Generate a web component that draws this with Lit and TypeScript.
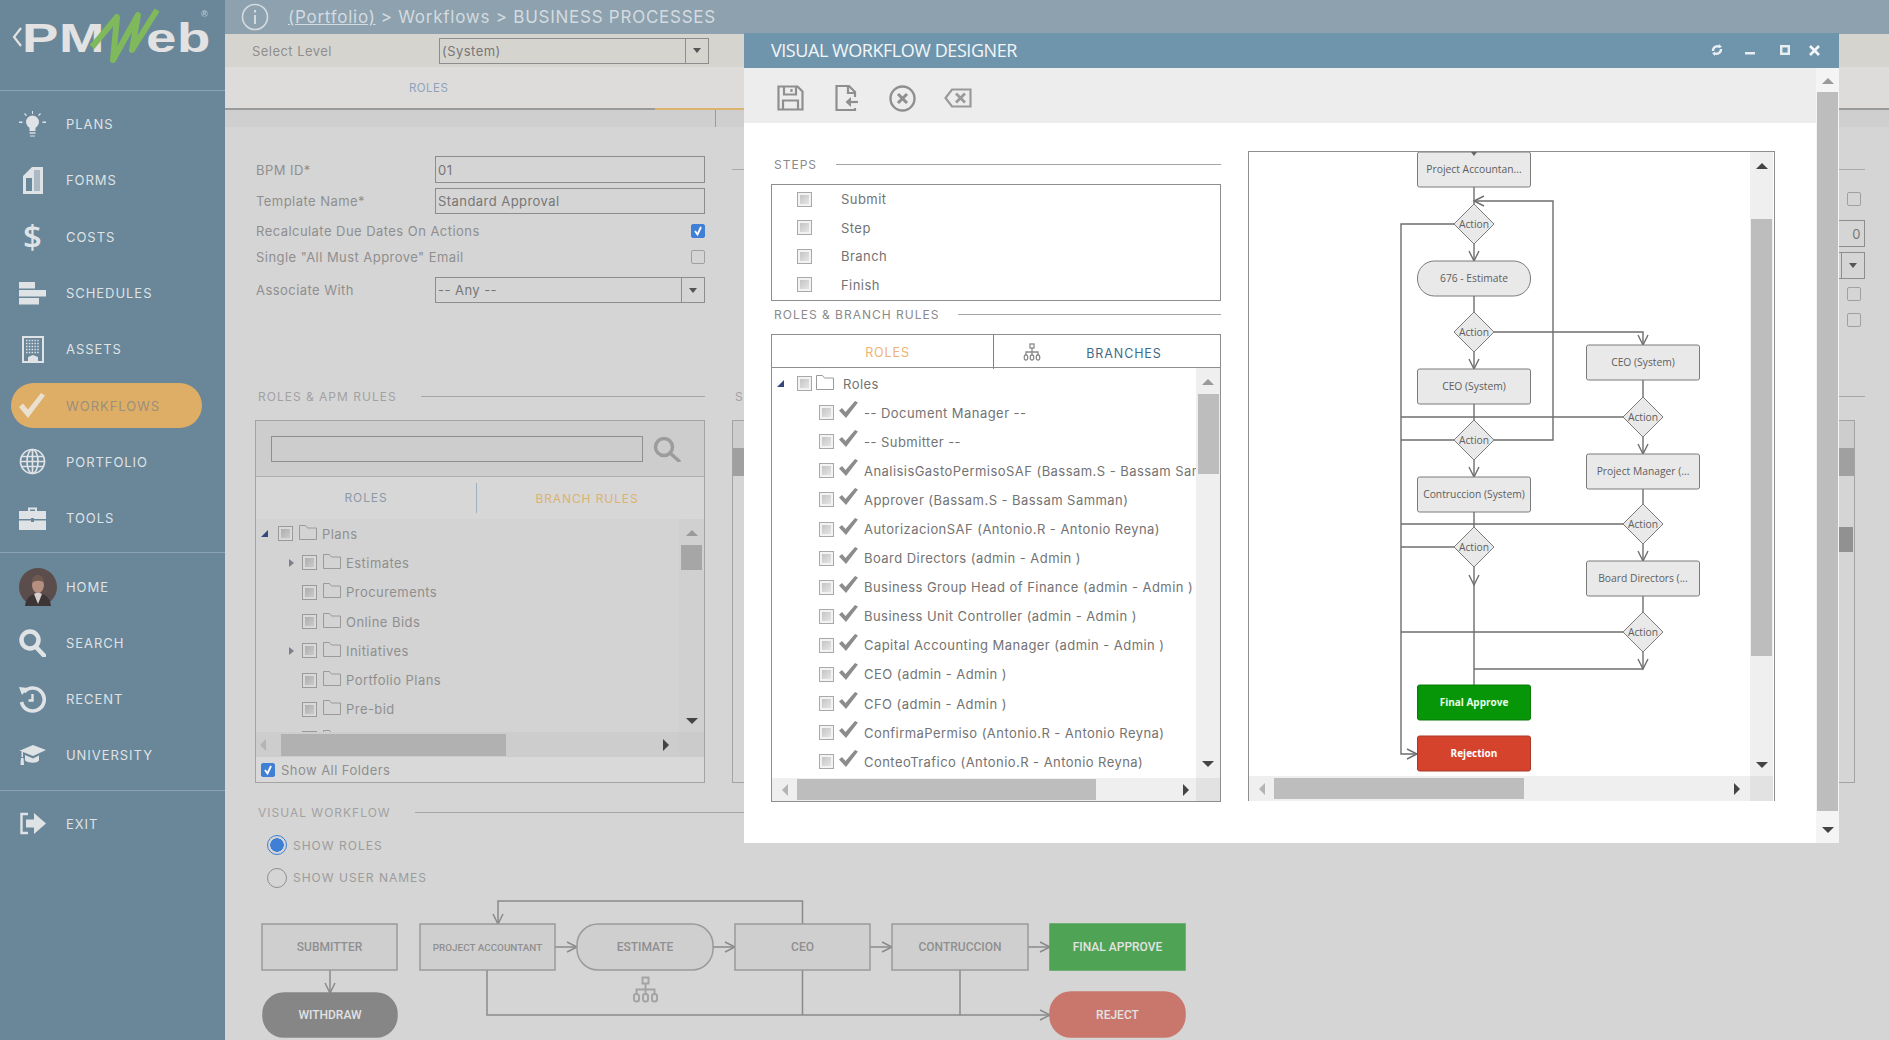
import {LitElement, css, html, svg} from 'lit'
import {customElement} from 'lit/decorators.js'

const UI = '#dfe3e5'

// ---- sidebar icons ----
const navIcons: Record<string, any> = {
  plans: svg`<svg width="27" height="27" viewBox="0 0 27 27" fill="${UI}">
    <circle cx="13.5" cy="11" r="6.5"/><rect x="10.5" y="16" width="6" height="4"/><rect x="10.5" y="21" width="6" height="2" opacity=".7"/><rect x="11" y="24" width="5" height="2" opacity=".5"/>
    <path d="M13 0h1v3h-1zM5 3l1-1 2 2.500-1 .6zM22 3l-1-1-2 2.500 1 .6zM0 10.500h3.500v1.500H0zM23.500 10.500H27v1.500h-3.500z"/></svg>`,
  forms: svg`<svg width="27" height="28" viewBox="0 0 27 28" fill="${UI}">
    <path fill-rule="evenodd" d="M4 10L13 1h11v27H4zM7 12v13h6V12zM15 4v21h6V4z"/><path d="M15 4h6v21h-6z" opacity=".55"/></svg>`,
  costs: html`<span class="dollar">$</span>`,
  schedules: svg`<svg width="27" height="23" viewBox="0 0 27 23" fill="${UI}">
    <rect x="0" y="0" width="16" height="6.500"/><rect x="0" y="8" width="27" height="6.500"/><rect x="0" y="16" width="20" height="6.500"/></svg>`,
  assets: svg`<svg width="27" height="27" viewBox="0 0 27 27">
    <rect x="4" y="1" width="20" height="25" fill="none" stroke="${UI}" stroke-width="2"/>
    <path d="M7 4.500h14M7 7.500h14M7 10.500h14M7 13.500h14M7 16.500h14" stroke="${UI}" stroke-width="1.600" stroke-dasharray="1.500 1.300"/>
    <path d="M9 26v-5l5-2 5 2v5z" fill="${UI}"/></svg>`,
  workflows: svg`<svg width="27" height="25" viewBox="0 0 27 25" fill="#e9e0cf">
    <path d="M0 14l4-3.500 5 6L22 0l4 2.500L9 25z"/></svg>`,
  portfolio: svg`<svg width="27" height="27" viewBox="0 0 27 27" fill="none" stroke="${UI}" stroke-width="1.700">
    <circle cx="13.500" cy="13.500" r="12"/><ellipse cx="13.500" cy="13.500" rx="5.500" ry="12"/><path d="M13.500 1.500v24M2.500 8.500h22M1.500 13.500h24M2.500 18.500h22"/></svg>`,
  tools: svg`<svg width="27" height="24" viewBox="0 0 27 24" fill="${UI}">
    <path fill-rule="evenodd" d="M9 5V1.500h9V5h-2V3.500h-5V5z"/><path d="M0 5h27v8H15v-1h-3v1H0zM0 14.500h12v1.500h3v-1.500h12V24H0z"/></svg>`,
  search: svg`<svg width="27" height="28" viewBox="0 0 27 28" fill="none" stroke="${UI}">
    <circle cx="11" cy="11" r="8.500" stroke-width="4.500"/><path d="M17 18l8 8.500" stroke-width="4.500" stroke-linecap="round"/></svg>`,
  recent: svg`<svg width="27" height="27" viewBox="0 0 27 27" fill="none" stroke="${UI}">
    <path d="M5 6a11.500 11.500 0 1 1-2.500 10" stroke-width="3.600"/><path d="M0 1l9 1-6 7z" fill="${UI}" stroke="none"/><path d="M13.500 8v6.500h-4" stroke-width="2.400"/></svg>`,
  university: svg`<svg width="27" height="21" viewBox="0 0 27 21" fill="${UI}">
    <path d="M0 6L14 0l13 5-13 6L4 7v5H2.500V6z"/><path d="M6 10l8 3.500 6-3v5c-2 3-10 3-14 0zM2 13h2.500l.5 7H1.500z"/></svg>`,
  exit: svg`<svg width="27" height="25" viewBox="0 0 27 25">
    <path d="M9 3H2.500v19H9" fill="none" stroke="${UI}" stroke-width="2.400"/>
    <path d="M7 8.500h8V2l12 10.500L15 23v-6.500H7z" fill="${UI}"/></svg>`,
  home: svg`<svg class="avatar" width="38" height="38" viewBox="0 0 38 38">
    <circle cx="19" cy="19" r="19" fill="#5a4d4c"/>
    <path d="M6 38c1-9 6-12 13-13 7 1 12 4 13 13z" fill="#3d3436"/>
    <path d="M15 26l4 10 4-10-4-2z" fill="#d5cfcd"/>
    <ellipse cx="19" cy="17" rx="6" ry="8" fill="#b58f80"/>
    <path d="M13 15c0-6 3-8 6-8s6 2 6 8c-2-3-9-3-12 0z" fill="#6f5a52"/>
  </svg>`,
}

const navGroups = [
  [
    ['plans', 'PLANS'],
    ['forms', 'FORMS'],
    ['costs', 'COSTS'],
    ['schedules', 'SCHEDULES'],
    ['assets', 'ASSETS'],
    ['workflows', 'WORKFLOWS'],
    ['portfolio', 'PORTFOLIO'],
    ['tools', 'TOOLS'],
  ],
  [
    ['home', 'HOME'],
    ['search', 'SEARCH'],
    ['recent', 'RECENT'],
    ['university', 'UNIVERSITY'],
  ],
  [['exit', 'EXIT']],
]

// ---- little shared bits ----
const box = (cls = '') => html`<span class="box ${cls}"></span>`
const folder = () => svg`<svg class="folder" width="18" height="15" viewBox="0 0 18 15" fill="none" stroke="#9a9a9a">
  <path d="M.5 14.500V.5h6l2 2.500h9v11.500z"/></svg>`
const tick = () => svg`<svg class="tick" width="19" height="17" viewBox="0 0 19 17" fill="#8c8c8c">
  <path d="M0 9.500l3-2.500 3.500 4L16 0l3 1.500L7 17z"/></svg>`
const hierarchy = (w: number, h: number, c: string) => svg`<svg width="${w}" height="${h}" viewBox="0 0 18 18" fill="none" stroke="${c}" stroke-width="1.300">
  <rect x="7" y="1" width="4" height="4"/><path d="M9 5v7M3 12V9h12v3"/><rect x="1.300" y="12" width="3.400" height="5" rx="1.500"/><rect x="7.300" y="12" width="3.400" height="5" rx="1.500"/><rect x="13.300" y="12" width="3.400" height="5" rx="1.500"/></svg>`
const smallTick = () => svg`<svg width="12" height="12" viewBox="0 0 12 12" fill="none" stroke="#fff" stroke-width="1.800"><path d="M3 6l2.500 3.500L9 2"/></svg>`

const plans = [
  ['Estimates', true],
  ['Procurements', false],
  ['Online Bids', false],
  ['Initiatives', true],
  ['Portfolio Plans', false],
  ['Pre-bid', false],
  ['', false],
] as [string, boolean][]

const roles = [
  '-- Document Manager --',
  '-- Submitter --',
  'AnalisisGastoPermisoSAF (Bassam.S - Bassam Samman)',
  'Approver (Bassam.S - Bassam Samman)',
  'AutorizacionSAF (Antonio.R - Antonio Reyna)',
  'Board Directors (admin - Admin )',
  'Business Group Head of Finance (admin - Admin )',
  'Business Unit Controller (admin - Admin )',
  'Capital Accounting Manager (admin - Admin )',
  'CEO (admin - Admin )',
  'CFO (admin - Admin )',
  'ConfirmaPermiso (Antonio.R - Antonio Reyna)',
  'ConteoTrafico (Antonio.R - Antonio Reyna)',
]

// open arrow head, tip at x,y
const head = (x: number, y: number, dir: 'd' | 'r' | 'l') => {
  const p =
    dir === 'd'
      ? `M${x - 5} ${y - 10}L${x} ${y}L${x + 5} ${y - 10}`
      : dir === 'r'
        ? `M${x - 10} ${y - 5}L${x} ${y}L${x - 10} ${y + 5}`
        : `M${x + 10} ${y - 5}L${x} ${y}L${x + 10} ${y + 5}`
  return svg`<path d="${p}" fill="none"/>`
}

// ---- designer flow chart, page coordinates ----
const AX = 1474
const BX = 1643
const flowBoxes: [number, number, string, string][] = [
  [AX, 152, 'Project Accountan...', ''],
  [AX, 261, '676 - Estimate', 'pill'],
  [AX, 369, 'CEO (System)', ''],
  [AX, 477, 'Contruccion (System)', ''],
  [BX, 345, 'CEO (System)', ''],
  [BX, 454, 'Project Manager (...', ''],
  [BX, 561, 'Board Directors (...', ''],
  [AX, 685, 'Final Approve', 'ok'],
  [AX, 736, 'Rejection', 'bad'],
]
const diamonds = [
  [AX, 224],
  [AX, 332],
  [AX, 440],
  [AX, 547],
  [BX, 417],
  [BX, 524],
  [BX, 632],
]
const flowLines = [
  'M1474 187V685',
  'M1643 380V669',
  'M1474 669H1643',
  'M1454 224H1401V754H1417',
  'M1494 440H1553V201H1474',
  'M1494 332H1643V345',
  'M1401 417H1623',
  'M1401 440H1454',
  'M1401 524H1623',
  'M1401 547H1454',
  'M1401 632H1623',
]

const flowChart = () => svg`<svg class="chart" viewBox="1249 152 501 624" width="501" height="624">
  <g fill="none" stroke="#6e6e6e" stroke-width="1.400">
    ${flowLines.map((d) => svg`<path d="${d}"/>`)}
    ${head(AX, 261, 'd')}${head(AX, 369, 'd')}${head(AX, 477, 'd')}${head(AX, 585, 'd')}
    ${head(BX, 345, 'd')}${head(BX, 454, 'd')}${head(BX, 561, 'd')}${head(BX, 669, 'd')}
    ${head(AX, 201, 'l')}${head(1417, 754, 'r')}
  </g>
  ${flowBoxes.map(([cx, y, label, kind]) => svg`
    <rect class="node ${kind}" x="${cx - 56.5}" y="${y}" width="113" height="35" rx="${kind === 'pill' ? 17 : 2}"/>
    <text class="node-text ${kind}" x="${cx}" y="${y + 21}">${label}</text>`)}
  <path d="M1471 152h6l-3 4z" fill="#666"/>
  ${diamonds.map(([cx, cy]) => svg`
    <path class="node" d="M${cx} ${cy - 20}L${cx + 20} ${cy}L${cx} ${cy + 20}L${cx - 20} ${cy}Z"/>
    <text class="node-text" x="${cx}" y="${cy + 4}">Action</text>`)}
</svg>`

// ---- workflow preview behind the dialog, page coordinates ----
const wfBoxes: [number, number, number, number, string, string][] = [
  [262, 924, 135, 46, 'SUBMITTER', ''],
  [420, 924, 135, 46, 'PROJECT ACCOUNTANT', 'small'],
  [577, 924, 136, 46, 'ESTIMATE', 'round'],
  [735, 924, 135, 46, 'CEO', ''],
  [892, 924, 136, 46, 'CONTRUCCION', ''],
  [1050, 924, 135, 46, 'FINAL APPROVE', 'done'],
  [263, 993, 134, 44, 'WITHDRAW', 'round dark'],
  [1050, 992, 135, 45, 'REJECT', 'round red'],
]
const workflowPreview = () => svg`<svg class="wf" viewBox="225 895 1664 145" width="1664" height="145">
  <g fill="none" stroke="#8a8a8a" stroke-width="1.500">
    <path d="M802.500 924V901H498V924"/>
    <path d="M330 970V993"/>
    <path d="M555 947H577M713 947H735M870 947H892M1028 947H1050"/>
    <path d="M487 970V1015H1050M802.500 970V1015M960 970V1015"/>
    ${head(498, 924, 'd')}${head(330, 993, 'd')}${head(577, 947, 'r')}${head(735, 947, 'r')}
    ${head(892, 947, 'r')}${head(1050, 947, 'r')}${head(1050, 1015, 'r')}
  </g>
  ${wfBoxes.map(([x, y, w, h, label, kind]) => svg`
    <rect class="wf-box ${kind}" x="${x}" y="${y}" width="${w}" height="${h}" rx="${kind.includes('round') ? 21 : 0}"/>
    <text class="wf-text ${kind}" x="${x + w / 2}" y="${y + h / 2 + 4}">${label}</text>`)}
  <g transform="translate(632 976)">${hierarchy(27, 27, '#a3a3a3')}</g>
</svg>`

@customElement('app-root')
export class AppRoot extends LitElement {
  static styles = css`
    :host {
      display: block;
      width: 1889px;
      height: 1040px;
      overflow: hidden;
      position: relative;
      background: #d5d5d5;
      font-family: Inter, 'Open Sans', sans-serif;
      font-size: 13px;
      letter-spacing: 0.45px;
      color: #8f8f8f;
    }

    .page {
      display: flex;
      height: 100%;
    }

    /* sidebar */
    .sidebar {
      width: 225px;
      flex: none;
      background: #6a8699;
      color: #dfe3e5;
    }
    .logo {
      height: 90px;
      box-sizing: border-box;
      padding: 8px 0 0 7px;
    }
    .logo svg {
      display: block;
    }
    .logo text {
      font-family: 'Liberation Sans', Arial, sans-serif;
      font-weight: 700;
      fill: #e2e2e2;
    }
    .group {
      padding-top: 5px;
    }
    .logo + .group {
      border-top: 1px solid #8ba2b2;
    }
    .group + .group {
      margin-top: 6px;
      border-top: 1px solid #8ba2b2;
    }
    .item {
      height: 56.3px;
      box-sizing: border-box;
      display: flex;
      align-items: center;
      padding-left: 19px;
      font-size: 13px;
      letter-spacing: 0.95px;
    }
    .item.active {
      height: 45px;
      margin: 5.6px 23px 5.7px 11px;
      padding-left: 8px;
      border-radius: 23px;
      background: #dfae66;
      color: #9b8f7d;
    }
    .nav-icon {
      width: 47px;
      flex: none;
      display: flex;
      align-items: center;
    }
    .nav-icon svg {
      display: block;
    }
    .dollar {
      width: 27px;
      text-align: center;
      font: 600 33px/1 'Open Sans', sans-serif;
      letter-spacing: 0;
      color: #dfe3e5;
    }

    /* page behind the dialog */
    .main {
      flex: 1;
      min-width: 0;
    }
    .topbar {
      height: 34px;
      background: #8da1ae;
      display: flex;
      align-items: center;
      padding-left: 16px;
      font-size: 17px;
      color: #d4dbe0;
      letter-spacing: 0.75px;
    }
    .topbar svg {
      margin-right: 19px;
    }
    .topbar u {
      margin-right: 5px;
    }
    .level {
      height: 33px;
      background: #d6d4cf;
      display: flex;
      align-items: center;
      padding-left: 27px;
    }
    .level .lab {
      width: 187px;
    }
    .tabs {
      height: 41px;
      background: #dddcda;
      padding-left: 184px;
      width: 430px;
      line-height: 43px;
      font-size: 11.500px;
      color: #8fa3bd;
    }
    .tabs-bg {
      background: #dddcda;
    }
    .tabline {
      display: flex;
      height: 2px;
      background: #9a9a9a;
    }
    .tabline i {
      display: block;
      width: 345px;
      margin-left: 430px;
      background: #dcb26f;
    }
    .band {
      height: 17px;
      background: #cfcfcf;
    }
    .band i {
      display: block;
      width: 1px;
      height: 17px;
      margin-left: 490px;
      background: #9c9c9c;
    }

    .form {
      height: 261px;
      box-sizing: border-box;
      padding: 29px 24px 0 30px;
      display: grid;
      grid-template-columns: 450px 1fr;
      column-gap: 27px;
    }
    .frow {
      display: flex;
      align-items: center;
      justify-content: space-between;
      height: 26px;
    }
    .frow > span:first-child {
      padding-left: 1px;
    }
    .frow.a {
      height: 27px;
    }
    .frow.b {
      margin-top: 5px;
    }
    .frow.c {
      margin-top: 4px;
    }
    .frow.e {
      margin-top: 7px;
    }
    .field {
      width: 270px;
      height: 100%;
      box-sizing: border-box;
      border: 1px solid #8d8d8d;
      padding-left: 2px;
      display: flex;
      align-items: center;
      color: #777;
    }
    .level .field {
      height: 26px;
    }
    .select {
      padding-right: 23px;
      justify-content: space-between;
    }
    .drop {
      margin-left: auto;
      margin-right: -23px;
      width: 22px;
      height: 100%;
      border-left: 1px solid #8d8d8d;
      display: flex;
      align-items: center;
      justify-content: center;
    }
    .check {
      width: 14px;
      height: 14px;
      box-sizing: border-box;
      border: 1px solid #a0a0a0;
      border-radius: 2px;
    }
    .check.on {
      background: #3f7fd6;
      border-color: #3f7fd6;
    }
    .check.on svg {
      display: block;
    }
    .rside {
      display: flex;
      flex-direction: column;
      align-items: flex-end;
    }
    .rside hr {
      width: 100%;
      height: 1px;
      margin: 13px 0 0;
      border: none;
      background: #a9a9a9;
    }
    .rside .check {
      margin: 22px 4px 0 0;
    }
    .rside .num {
      width: 140px;
      height: 27px;
      margin-top: 14px;
      justify-content: flex-end;
      padding-right: 3px;
    }
    .rside .sel {
      width: 120px;
      height: 27px;
      margin-top: 5px;
      justify-content: flex-end;
      padding: 0;
    }
    .rside .sel .drop {
      margin: 0;
    }
    .rside .check.c2 {
      margin-top: 8px;
    }
    .rside .check.c3 {
      margin-top: 12px;
    }

    .section {
      display: flex;
      align-items: center;
      gap: 24px;
      height: 16px;
      padding-left: 3px;
      font-size: 12px;
      letter-spacing: 1px;
      color: #a2a2a2;
      white-space: nowrap;
    }
    .section::after {
      content: '';
      flex: 1;
      height: 1px;
      background: #a5a5a5;
    }
    .cols {
      display: grid;
      grid-template-columns: 450px 1fr;
      column-gap: 27px;
      padding: 0 24px 0 30px;
    }
    .panel {
      margin-top: 16px;
      height: 363px;
      box-sizing: border-box;
      border: 1px solid #a3a3a3;
      display: flex;
      flex-direction: column;
    }
    .panel-mid {
      margin-right: 10px;
    }
    .strip {
      height: 27px;
      background: #cdcdcd;
    }
    .strip.dark {
      height: 28px;
      background: #a0a0a0;
    }
    .sliver {
      align-self: flex-end;
      width: 15px;
      height: 25px;
      margin: 51px 1px 0 0;
      background: #919191;
    }
    .searchbar {
      height: 56px;
      box-sizing: border-box;
      flex: none;
      background: #cdcdcd;
      border-bottom: 1px solid #aeaeae;
      padding-left: 15px;
      display: flex;
      align-items: center;
      gap: 10px;
    }
    .searchbar span {
      width: 372px;
      height: 26px;
      box-sizing: border-box;
      border: 1px solid #8f8f8f;
    }
    .ptabs {
      height: 42px;
      flex: none;
      display: grid;
      grid-template-columns: 221px 1fr;
      align-items: center;
      text-align: center;
      font-size: 12px;
      letter-spacing: 0.9px;
      background: #d7d7d7;
    }
    .ptabs .on {
      color: #8d99a7;
      height: 30px;
      line-height: 30px;
      border-right: 1px solid #9fb0bf;
    }
    .ptabs .off {
      color: #dcb26f;
      padding-right: 7px;
    }
    .treewrap {
      flex: none;
      height: 238px;
      display: grid;
      grid-template-columns: 1fr 25px;
      grid-template-rows: 213px 25px;
      background: #d3d3d3;
    }
    .tree {
      overflow: hidden;
    }
    .tree-row {
      height: 29.3px;
      display: flex;
      align-items: center;
      white-space: nowrap;
    }
    .tree-row .box {
      margin-right: 6px;
    }
    .folder {
      flex: none;
      margin-right: 5px;
      margin-top: -3px;
    }
    .tw {
      width: 17px;
      flex: none;
      box-sizing: border-box;
      display: flex;
    }
    .tree-row.root {
      padding-left: 5px;
    }
    .tree-row.sub {
      padding-left: 29px;
    }
    .tree-row.sub .tw {
      padding-left: 4px;
    }
    .showall {
      flex: 1;
      display: flex;
      align-items: center;
      gap: 6px;
      padding-left: 5px;
      background: #d9d9d9;
    }

    /* checkbox of the tree controls */
    .box {
      width: 15px;
      height: 15px;
      flex: none;
      box-sizing: border-box;
      border: 1px solid #a9a9a9;
      box-shadow: inset 0 0 0 2px #f3f3f3;
      background: linear-gradient(135deg, #bdbdbd, #ececec);
      display: block;
    }
    .behind .box {
      border-color: #9a9a9a;
      box-shadow: inset 0 0 0 2px #d9d9d9;
      background: linear-gradient(135deg, #a9a9a9, #cfcfcf);
    }

    /* scrollbar pieces */
    .vbar {
      display: flex;
      flex-direction: column;
      align-items: center;
      background: #efefef;
    }
    .hbar {
      display: flex;
      align-items: center;
      background: #efefef;
    }
    .corner {
      background: #e2e2e2;
    }
    .thumb {
      background: #bdbdbd;
      display: block;
    }
    .arr {
      width: 0;
      height: 0;
      display: block;
      flex: none;
      border-style: solid;
      border-color: transparent;
    }
    .arr.up {
      border-width: 0 6px 6px;
      border-bottom-color: #9a9a9a;
    }
    .arr.down {
      border-width: 6px 6px 0;
      border-top-color: #444;
      margin-top: auto;
    }
    .arr.left {
      border-width: 6px 6px 6px 0;
      border-right-color: #b4b4b4;
    }
    .arr.right {
      border-width: 6px 0 6px 6px;
      border-left-color: #444;
      margin-left: auto;
    }
    .arr.open {
      border-width: 0 0 7px 7px;
      border-bottom-color: #38467f;
    }
    .arr.closed {
      border-width: 4px 0 4px 5px;
      border-left-color: #7d7d90;
    }
    .arr.mini {
      border-width: 5px 4.500px 0;
      border-top-color: #555;
      margin: 0;
    }

    .treewrap .vbar {
      background: #d0d0d0;
      padding: 11px 0 8px;
    }
    .treewrap .vbar .thumb {
      width: 21px;
      height: 25px;
      margin-top: 9px;
      background: #a6a6a6;
    }
    .treewrap .hbar {
      background: #cdcdcd;
      padding: 0 10px 0 4px;
    }
    .treewrap .hbar .thumb {
      width: 225px;
      height: 22px;
      margin-left: 15px;
      background: #b1b1b1;
    }
    .treewrap .corner {
      background: #cbcbcb;
    }

    .radios {
      padding: 13px 0 0 42px;
      display: flex;
      flex-direction: column;
      gap: 8.500px;
      font-size: 12px;
      letter-spacing: 1px;
      color: #9c9c9c;
    }
    .radio {
      height: 24px;
      display: flex;
      align-items: center;
      gap: 6px;
    }
    .dot {
      width: 20px;
      height: 20px;
      box-sizing: border-box;
      border-radius: 50%;
      border: 1px solid #8f8f8f;
    }
    .dot.on {
      border-color: #3f7fd6;
      background: radial-gradient(circle, #3f7fd6 0 6.500px, #d5d5d5 7px);
    }
    .vw {
      margin-top: 21px;
      padding: 0 0 0 30px;
    }
    .vw .section {
      width: 680px;
    }
    .wf {
      display: block;
      margin-top: 5px;
    }
    .wf text {
      font-family: Roboto, 'Liberation Sans', sans-serif;
      letter-spacing: 0;
    }
    .wf-box {
      fill: #cfcfcf;
      stroke: #9b9b9b;
      stroke-width: 1.500;
    }
    .wf-box.done {
      fill: #4fa354;
      stroke: #4fa354;
    }
    .wf-box.dark {
      fill: #868686;
      stroke: #868686;
    }
    .wf-box.red {
      fill: #c9776c;
      stroke: #c9776c;
    }
    .wf-text {
      font-size: 12px;
      font-weight: 500;
      text-anchor: middle;
      fill: #8f8f8f;
    }
    .wf-text.small {
      font-size: 9.900px;
    }
    .wf-text.done,
    .wf-text.dark,
    .wf-text.red {
      fill: #e2e2e2;
    }

    /* designer dialog */
    .modal {
      position: absolute;
      left: 744px;
      top: 33px;
      width: 1095px;
      height: 810px;
      background: #fff;
      display: flex;
      flex-direction: column;
      color: #737373;
    }
    .mhead {
      height: 35px;
      flex: none;
      box-sizing: border-box;
      padding: 0 0 1px 27px;
      background: #6f95ac;
      display: flex;
      align-items: center;
      color: #f3f6f8;
      font: 400 18px 'Open Sans', sans-serif;
      letter-spacing: -0.45px;
    }
    .mhead svg {
      display: block;
    }
    .wbtns {
      margin-left: auto;
      display: flex;
      align-items: center;
      padding-right: 19px;
      gap: 22px;
    }
    .wbtns .mx {
      margin-right: -3px;
      margin-left: 3px;
    }
    .mbody {
      flex: 1;
      min-height: 0;
      display: flex;
    }
    .mmain {
      flex: 1;
      min-width: 0;
    }
    .toolbar {
      height: 55px;
      box-sizing: border-box;
      padding: 5px 0 0 18px;
      background: #ededed;
      display: flex;
      align-items: center;
    }
    .toolbar span {
      width: 56px;
      display: flex;
      justify-content: center;
    }
    .mcols {
      display: flex;
      gap: 27px;
      padding-left: 27px;
    }
    .mleft {
      width: 450px;
      padding-top: 33px;
    }
    .mleft .section {
      gap: 19px;
      color: #8a8a8a;
    }
    .steps {
      margin-top: 12px;
      height: 117px;
      box-sizing: border-box;
      border: 1px solid #8e8e8e;
    }
    .step {
      height: 28.500px;
      display: flex;
      align-items: center;
      padding-left: 25px;
      gap: 29px;
    }
    .mleft .sec2 {
      margin-top: 5px;
    }
    .rolesbox {
      margin-top: 12px;
      height: 468px;
      box-sizing: border-box;
      border: 1px solid #8e8e8e;
      display: flex;
      flex-direction: column;
    }
    .rtabs {
      height: 32px;
      flex: none;
      border-bottom: 1px solid #8e8e8e;
      display: grid;
      grid-template-columns: 222px 50px 1fr;
      align-items: center;
      font-size: 12.500px;
      letter-spacing: 0.9px;
    }
    .rtabs .on {
      height: 100%;
      box-sizing: border-box;
      padding: 2px 0 0 10px;
      line-height: 32px;
      text-align: center;
      color: #efb273;
      border-right: 1px solid #4f8fbc;
    }
    .rtabs .ico {
      display: flex;
      justify-content: center;
      padding-left: 26px;
    }
    .rtabs .off {
      text-align: center;
      color: #3f6a8a;
      padding: 3px 16px 0 0;
    }
    .rtree {
      flex: 1;
      min-height: 0;
      display: grid;
      grid-template-columns: 1fr 24px;
      grid-template-rows: 410px 23px;
    }
    .rlist {
      overflow: hidden;
      padding-top: 1px;
    }
    .rrow {
      height: 29.100px;
      display: flex;
      align-items: center;
      white-space: nowrap;
      padding-left: 47px;
    }
    .rrow.top {
      padding-left: 5px;
    }
    .rrow .box {
      margin-right: 5px;
    }
    .rrow .tw {
      width: 20px;
    }
    .rrow .tick {
      margin: -6px 6px 0 0;
      flex: none;
    }
    .rrow.top .box {
      margin-right: 4px;
    }
    .rtree .vbar {
      padding: 11px 0;
    }
    .rtree .vbar .thumb {
      width: 21px;
      height: 80px;
      margin-top: 9px;
    }
    .rtree .hbar {
      padding: 0 7px 0 10px;
    }
    .rtree .hbar .thumb {
      width: 299px;
      height: 21px;
      margin-left: 9px;
    }

    .mright {
      margin-top: 28px;
      width: 527px;
      height: 650px;
      box-sizing: border-box;
      border: 1px solid #8e8e8e;
      border-bottom: none;
      display: grid;
      grid-template-columns: 501px 23px;
      grid-template-rows: 624px 25px;
    }
    .chart {
      display: block;
    }
    .chart text {
      letter-spacing: 0;
      font-family: 'Open Sans', sans-serif;
    }
    .node {
      fill: #e9e9e9;
      stroke: #7b7b7b;
      stroke-width: 1;
    }
    .node.ok {
      fill: #079607;
      stroke: #0b7a0b;
    }
    .node.bad {
      fill: #d6432c;
      stroke: #a8392a;
    }
    .node-text {
      font-size: 10.300px;
      text-anchor: middle;
      fill: #5e5e5e;
    }
    .node-text.ok,
    .node-text.bad {
      font-size: 10px;
      font-weight: 700;
      fill: #e6ffe6;
    }
    .node-text.bad {
      fill: #fff;
    }
    .mright .vbar {
      padding: 11px 0 8px;
    }
    .mright .vbar .thumb {
      width: 21px;
      height: 437px;
      margin-top: 50px;
    }
    .mright .vbar .arr.up {
      border-bottom-color: #444;
    }
    .mright .hbar {
      padding: 0 10px 0 10px;
    }
    .mright .hbar .thumb {
      width: 250px;
      height: 21px;
      margin-left: 9px;
    }
    .mscroll {
      width: 23px;
      flex: none;
      padding: 10px 0 10px;
      background: #f4f4f4;
    }
    .mscroll .thumb {
      width: 21px;
      height: 719px;
      margin-top: 8px;
    }
  `

  private renderSidebar() {
    return html`
      <aside class="sidebar">
        <div class="logo">
          <svg width="210" height="60" viewBox="7 8 210 60">
            <path d="M21 28l-7 9 7 9" fill="none" stroke="#e2e2e2" stroke-width="2.200"/>
            <text x="22" y="52" font-size="41" textLength="83" lengthAdjust="spacingAndGlyphs">PM</text>
            <text x="146" y="52" font-size="41" textLength="65" lengthAdjust="spacingAndGlyphs">eb</text>
            <path d="M92 47L117 17 113 60 138 15 132 50 157 10" fill="none" stroke="#7fb95c" stroke-width="6" stroke-linejoin="round"/>
            <text x="201" y="17" font-size="9" fill-opacity=".7">®</text>
          </svg>
        </div>
        ${navGroups.map(
          (group) => html`
            <div class="group">
              ${group.map(
                ([key, label]) => html`
                  <div class="item ${key === 'workflows' ? 'active' : ''}">
                    <span class="nav-icon">${navIcons[key]}</span>${label}
                  </div>
                `,
              )}
            </div>
          `,
        )}
      </aside>
    `
  }

  private renderBehind() {
    return html`
      <main class="main behind">
        <div class="topbar">
          <svg width="28" height="28" viewBox="0 0 28 28" fill="none" stroke="#d4dbe0" stroke-width="1.600">
            <circle cx="14" cy="14" r="12.500"/><path d="M14 12v9M14 7v2.500" stroke-width="2"/>
          </svg>
          <u>(Portfolio)</u> &gt; Workflows &gt; BUSINESS PROCESSES
        </div>
        <div class="level">
          <span class="lab">Select Level</span>
          <span class="field select">(System)<span class="drop"><i class="arr mini"></i></span></span>
        </div>
        <div class="tabs-bg"><div class="tabs">ROLES</div></div>
        <div class="tabline"><i></i></div>
        <div class="band"><i></i></div>

        <div class="form">
          <div>
            <div class="frow a"><span>BPM ID*</span><span class="field">01</span></div>
            <div class="frow b"><span>Template Name*</span><span class="field">Standard Approval</span></div>
            <div class="frow c">
              <span>Recalculate Due Dates On Actions</span>
              <span class="check on">${smallTick()}</span>
            </div>
            <div class="frow"><span>Single "All Must Approve" Email</span><span class="check"></span></div>
            <div class="frow e">
              <span>Associate With</span>
              <span class="field select">-- Any --<span class="drop"><i class="arr mini"></i></span></span>
            </div>
          </div>
          <div class="rside">
            <hr />
            <span class="check"></span>
            <span class="field num">0</span>
            <span class="field sel"><span class="drop"><i class="arr mini"></i></span></span>
            <span class="check c2"></span>
            <span class="check c3"></span>
          </div>
        </div>

        <div class="cols">
          <div>
            <div class="section">ROLES &amp; APM RULES</div>
            <div class="panel">
              <div class="searchbar">
                <span></span>
                <svg width="28" height="26" viewBox="0 0 28 26" fill="none" stroke="#9c9c9c" stroke-width="3.500">
                  <circle cx="11" cy="11" r="8.500"/><path d="M17 17l9 8" stroke-linecap="round"/>
                </svg>
              </div>
              <div class="ptabs"><span class="on">ROLES</span><span class="off">BRANCH RULES</span></div>
              <div class="treewrap">
                <div class="tree">
                  <div class="tree-row root">
                    <span class="tw"><i class="arr open"></i></span>${box()}${folder()}Plans
                  </div>
                  ${plans.map(
                    ([name, more]) => html`
                      <div class="tree-row sub">
                        <span class="tw">${more ? html`<i class="arr closed"></i>` : ''}</span>${box()}${folder()}${name}
                      </div>
                    `,
                  )}
                </div>
                <div class="vbar"><i class="arr up"></i><i class="thumb"></i><i class="arr down"></i></div>
                <div class="hbar"><i class="arr left"></i><i class="thumb"></i><i class="arr right"></i></div>
                <div class="corner"></div>
              </div>
              <div class="showall">
                <span class="check on">${smallTick()}</span>
                Show All Folders
              </div>
            </div>
          </div>
          <div>
            <div class="section">STEPS</div>
            <div class="panel panel-mid">
              <div class="strip"></div>
              <div class="strip dark"></div>
              <div class="sliver"></div>
            </div>
          </div>
        </div>

        <div class="vw">
          <div class="section">VISUAL WORKFLOW</div>
        </div>
        <div class="radios">
          <div class="radio"><span class="dot on"></span>SHOW ROLES</div>
          <div class="radio"><span class="dot"></span>SHOW USER NAMES</div>
        </div>
        ${workflowPreview()}
      </main>
    `
  }

  private renderModal() {
    return html`
      <section class="modal">
        <header class="mhead">
          VISUAL WORKFLOW DESIGNER
          <div class="wbtns">
            <svg width="12" height="12" viewBox="0 0 12 12" fill="none" stroke="#e8eef2" stroke-width="2.400">
              <path d="M2 7a4.500 4.500 0 0 1 7-4M10 5a4.500 4.500 0 0 1-7 4"/><path d="M8 0l3 3-3 1zM4 12L1 9l3-1z" fill="#e8eef2" stroke="none"/>
            </svg>
            <svg width="10" height="12" viewBox="0 0 10 12" fill="#e8eef2"><rect y="8" width="10" height="2.500"/></svg>
            <svg class="mx" width="10" height="10" viewBox="0 0 10 10" fill="none" stroke="#e8eef2" stroke-width="2.500"><rect x="1.200" y="1.200" width="7.600" height="7.600"/></svg>
            <svg width="11" height="11" viewBox="0 0 11 11" fill="none" stroke="#f4f7f9" stroke-width="2.600"><path d="M1 1l9 9M10 1l-9 9"/></svg>
          </div>
        </header>
        <div class="mbody">
          <div class="mmain">
            <div class="toolbar">
              <span>
                <svg width="27" height="26" viewBox="0 0 27 26" fill="none" stroke="#8f8f8f" stroke-width="2.200">
                  <path d="M1.500 1.500h19l5 5v18h-24z"/><path d="M7 1.500v8h12v-8M14.500 4v3" /><path d="M6 24.500v-9h15v9"/>
                </svg>
              </span>
              <span>
                <svg width="23" height="26" viewBox="0 0 23 26" fill="none" stroke="#8f8f8f" stroke-width="2.200">
                  <path d="M20 12V7l-6-6H1.500v24H20v-2"/><path d="M13 1.500V8h7"/><path d="M23 17H12" /><path d="M16 12l-5.500 5 5.500 5" fill="#8f8f8f" stroke="none"/>
                </svg>
              </span>
              <span>
                <svg width="27" height="27" viewBox="0 0 27 27" fill="none" stroke="#8f8f8f">
                  <circle cx="13.500" cy="13.500" r="12" stroke-width="2.400"/><path d="M9 9l9 9M18 9l-9 9" stroke-width="3"/>
                </svg>
              </span>
              <span>
                <svg width="28" height="20" viewBox="0 0 28 20" fill="none" stroke="#9a9a9a">
                  <path d="M8 1.500h18.500v17H8L1.500 10z" stroke-width="2.200"/><path d="M12 5.500l9 9M21 5.500l-9 9" stroke-width="2.800"/>
                </svg>
              </span>
            </div>
            <div class="mcols">
              <div class="mleft">
                <div class="section">STEPS</div>
                <div class="steps">
                  ${['Submit', 'Step', 'Branch', 'Finish'].map(
                    (s) => html`<div class="step">${box()}${s}</div>`,
                  )}
                </div>
                <div class="section sec2">ROLES &amp; BRANCH RULES</div>
                <div class="rolesbox">
                  <div class="rtabs">
                    <span class="on">ROLES</span>
                    <span class="ico">${hierarchy(18, 18, '#8a8a8a')}</span>
                    <span class="off">BRANCHES</span>
                  </div>
                  <div class="rtree">
                    <div class="rlist">
                      <div class="rrow top">
                        <span class="tw"><i class="arr open"></i></span>${box()}${folder()}<span>&nbsp;Roles</span>
                      </div>
                      ${roles.map(
                        (r) => html`<div class="rrow">${box()}${tick()}${r}</div>`,
                      )}
                    </div>
                    <div class="vbar"><i class="arr up"></i><i class="thumb"></i><i class="arr down"></i></div>
                    <div class="hbar"><i class="arr left"></i><i class="thumb"></i><i class="arr right"></i></div>
                    <div class="corner"></div>
                  </div>
                </div>
              </div>
              <div class="mright">
                ${flowChart()}
                <div class="vbar"><i class="arr up"></i><i class="thumb"></i><i class="arr down"></i></div>
                <div class="hbar"><i class="arr left"></i><i class="thumb"></i><i class="arr right"></i></div>
                <div class="corner"></div>
              </div>
            </div>
          </div>
          <div class="vbar mscroll"><i class="arr up"></i><i class="thumb"></i><i class="arr down"></i></div>
        </div>
      </section>
    `
  }

  render() {
    return html`
      <div class="page">${this.renderSidebar()}${this.renderBehind()}</div>
      ${this.renderModal()}
    `
  }
}
